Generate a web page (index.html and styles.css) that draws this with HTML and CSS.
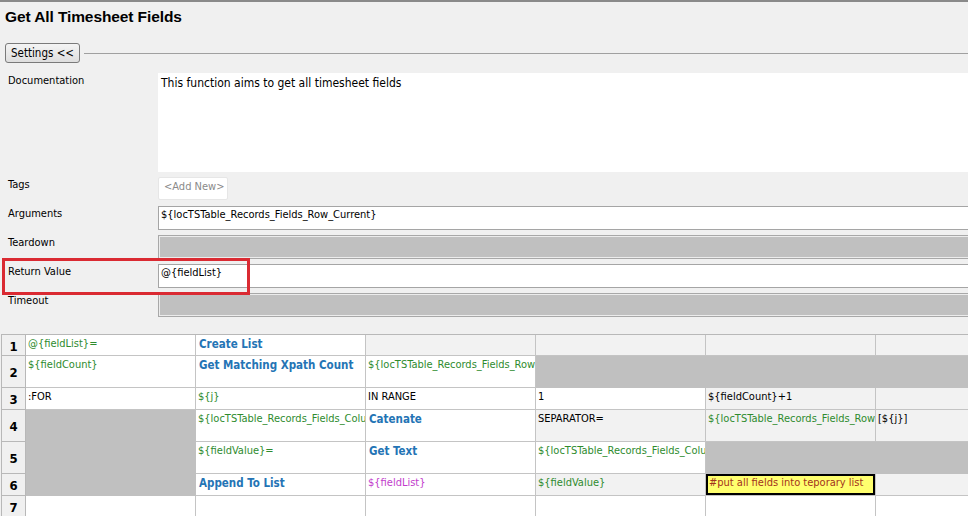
FILE: index.html
```html
<!DOCTYPE html>
<html>
<head>
<meta charset="utf-8">
<link rel="stylesheet" href="styles.css">
</head>
<body>
<div class="app">
  <div class="title">Get All Timesheet Fields</div>
  <div class="settings-bar">
    <button class="btn">Settings &lt;&lt;</button>
    <span class="rule"></span>
  </div>
  <div class="form">
    <div class="row doc-row">
      <div class="label">Documentation</div>
      <div class="field doc">This function aims to get all timesheet fields</div>
    </div>
    <div class="row">
      <div class="label">Tags</div>
      <div class="tag">&lt;Add New&gt;</div>
    </div>
    <div class="row">
      <div class="label">Arguments</div>
      <div class="field input">${locTSTable_Records_Fields_Row_Current}</div>
    </div>
    <div class="row">
      <div class="label">Teardown</div>
      <div class="field disabled"></div>
    </div>
    <div class="row">
      <div class="label">Return Value</div>
      <div class="field input">@{fieldList}</div>
    </div>
    <div class="row">
      <div class="label">Timeout</div>
      <div class="field disabled"></div>
    </div>
    <div class="highlight"></div>
  </div>

  <div class="grid">
    <div class="num r1">1</div>
    <div class="c var">@{fieldList}=</div>
    <div class="c kw">Create List</div>
    <div class="c opt"></div>
    <div class="c opt"></div>
    <div class="c opt"></div>
    <div class="c opt"></div>

    <div class="num">2</div>
    <div class="c var">${fieldCount}</div>
    <div class="c kw">Get Matching Xpath Count</div>
    <div class="c var">${locTSTable_Records_Fields_Row</div>
    <div class="c na span3"></div>

    <div class="num">3</div>
    <div class="c">:FOR</div>
    <div class="c var">${j}</div>
    <div class="c">IN RANGE</div>
    <div class="c">1</div>
    <div class="c opt">${fieldCount}+1</div>
    <div class="c opt"></div>

    <div class="num">4</div>
    <div class="c na rspan3"></div>
    <div class="c var">${locTSTable_Records_Fields_Colu</div>
    <div class="c kw">Catenate</div>
    <div class="c opt">SEPARATOR=</div>
    <div class="c opt var">${locTSTable_Records_Fields_Row</div>
    <div class="c opt">[${j}]</div>

    <div class="num">5</div>
    <div class="c var">${fieldValue}=</div>
    <div class="c kw">Get Text</div>
    <div class="c var">${locTSTable_Records_Fields_Colu</div>
    <div class="c na span2"></div>

    <div class="num">6</div>
    <div class="c kw">Append To List</div>
    <div class="c lvar">${fieldList}</div>
    <div class="c opt var">${fieldValue}</div>
    <div class="c comment">#put all fields into teporary list</div>
    <div class="c opt"></div>

    <div class="num">7</div>
    <div class="c"></div>
    <div class="c"></div>
    <div class="c"></div>
    <div class="c"></div>
    <div class="c"></div>
    <div class="c"></div>
  </div>
</div>
</body>
</html>
```

FILE: styles.css
```css
* { box-sizing: border-box; }
html, body {
  margin: 0;
  padding: 0;
  background: #f0f0f0;
  overflow: hidden;
}
body {
  font-family: "DejaVu Sans Condensed", "DejaVu Sans", sans-serif;
  font-stretch: condensed;
  font-size: 11px;
  color: #000;
}
.app {
  width: 968px;
  height: 516px;
  overflow: hidden;
  border-top: 2px solid #8a8a8a;
  position: relative;
}
.title {
  height: 41px;
  padding: 6px 0 0 5px;
  font-family: "Liberation Sans", Arial, sans-serif;
  font-stretch: normal;
  font-size: 15.5px;
  line-height: 18px;
  font-weight: bold;
  letter-spacing: -0.1px;
}
.settings-bar {
  display: flex;
  align-items: center;
  height: 20px;
  margin-bottom: 10px;
  padding-left: 5px;
}
.btn {
  width: 75px;
  height: 20px;
  margin: 0;
  padding: 0;
  font-family: "DejaVu Sans Condensed", "DejaVu Sans", sans-serif;
  font-stretch: condensed;
  font-size: 11.5px;
  color: #000;
  border: 1px solid #7a7a7a;
  border-radius: 3px;
  background: linear-gradient(#f4f4f4, #dedede);
}
.rule {
  flex: 1;
  height: 1px;
  margin-left: 4px;
  background: #a0a0a0;
}
.form {
  position: relative;
}
.row {
  display: flex;
  height: 29px;
}
.doc-row {
  height: 104px;
}
.label {
  width: 158px;
  flex: none;
  padding: 1px 0 0 8px;
  line-height: 14px;
}
.field {
  flex: 1;
  margin-right: -10px;
  height: 24px;
}
.doc {
  height: 99px;
  background: #fff;
  padding: 3px 3px;
  font-size: 12px;
  line-height: 14px;
}
.input {
  background: #fff;
  border: 1px solid #a5a5a5;
  padding: 1px 2px;
  line-height: 14px;
}
.disabled {
  height: 24px;
  background: #c0c0c0;
  border: 1px solid #a8a8a8;
  box-shadow: inset 0 0 0 1px #ececec;
}
.tag {
  width: 70px;
  height: 23px;
  background: #fff;
  border: 1px solid #e6e6e6;
  border-radius: 2px;
  color: #8a8a8a;
  padding: 2px 0 0 5px;
  line-height: 14px;
}
.highlight {
  position: absolute;
  left: 2px;
  top: 185px;
  width: 248px;
  height: 37px;
  border: 3px solid #da2a32;
}
.grid {
  margin: 12px 0 0 1px;
  display: grid;
  grid-template-columns: 24px repeat(6, 170px);
  grid-template-rows: 21px 32px 22px 32px 32px 22px 22px;
  border-top: 1px solid #b8b8b8;
  border-left: 1px solid #b8b8b8;
  width: max-content;
}
.num {
  background: #f0f0f0;
  border-right: 1px solid #b8b8b8;
  border-bottom: 1px solid #b8b8b8;
  display: flex;
  align-items: center;
  justify-content: center;
  font-weight: bold;
  font-size: 13px;
  padding-top: 2px;
}
.c {
  background: #fff;
  border-right: 1px solid #c4c4c4;
  border-bottom: 1px solid #c4c4c4;
  padding: 2px 0 0 2px;
  line-height: 14px;
  white-space: nowrap;
  overflow: hidden;
  font-size: 11px;
}
.opt { background: #f2f2f2; }
.na { background: #c0c0c0; border-color: #c0c0c0; }
.span3 { grid-column: span 3; }
.span2 { grid-column: span 2; }
.rspan3 { grid-row: span 3; }
.var { color: #2e8b2e; }
.lvar { color: #c23ccc; }
.kw {
  color: #2474b5;
  font-weight: bold;
  font-size: 11.5px;
  padding-left: 3px;
}
.comment {
  background: #ffff6e;
  box-shadow: inset 0 0 0 2px #000;
  color: #a3321d;
  padding-left: 3px;
}
```
